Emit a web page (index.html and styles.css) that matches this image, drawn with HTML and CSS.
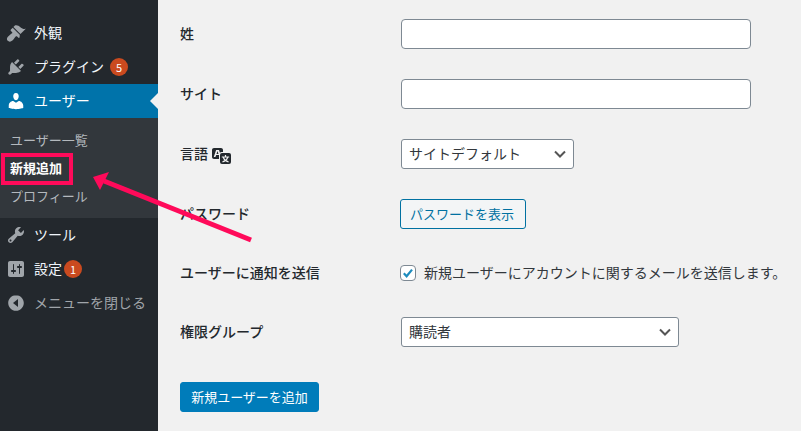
FILE: index.html
```html
<!DOCTYPE html>
<html lang="ja">
<head>
<meta charset="utf-8">
<title>新規追加</title>
<link rel="stylesheet" href="styles.css">
</head>
<body>
<div class="page">
  <aside class="sidebar">
    <nav class="menu">
      <a class="item"><svg class="ico" viewBox="0 0 20 20"><path d="M14.48 11.06L7.41 3.99l1.5-1.5c.5-.56 2.3-.47 3.51.32 1.21.8 1.43 1.28 2.91 2.1 1.18.64 2.45 1.26 4.45.85zm-.71.71L6.7 4.7 4.93 6.47c-.39.39-.39 1.02 0 1.41l1.06 1.06c.39.39.39 1.03 0 1.42-.6.6-1.43 1.11-2.21 1.69-.35.26-.7.53-1.01.84C1.43 13.71-.05 16.08 1.72 17.85c1.77 1.77 4.14.29 5.45-1.07.31-.31.58-.66.84-1.01.58-.78 1.09-1.61 1.69-2.21.39-.39 1.03-.39 1.42 0l1.06 1.06c.39.39 1.02.39 1.41 0z"/></svg><span>外観</span></a>
      <a class="item"><svg class="ico" viewBox="0 0 20 20"><path d="M13.11 4.36L9.87 7.6 8 5.73l3.24-3.24c.35-.34 1.05-.2 1.56.32.52.51.66 1.21.31 1.55zm-8 1.77l.91-1.12 9.01 9.01-1.19.84c-.71.71-2.63 1.16-3.82 1.16H6.14L4.9 17.26c-.59.59-1.54.59-2.12 0-.59-.58-.59-1.53 0-2.12l1.24-1.24v-3.88c0-1.13.4-3.19 1.09-3.89zm7.26 3.97l3.24-3.24c.34-.35 1.04-.21 1.55.31.52.51.66 1.21.31 1.55l-3.24 3.25z"/></svg><span>プラグイン</span><b class="badge badge-plugins">5</b></a>
      <a class="item active"><svg class="ico" viewBox="0 0 20 20"><path d="M10 9.25c-2.27 0-2.73-3.44-2.73-3.44C7 4.02 7.82 2 9.97 2c2.16 0 2.98 2.02 2.71 3.81 0 0-.41 3.44-2.68 3.44zm0 2.57L12.72 10c2.39 0 4.52 2.33 4.52 4.53v2.49s-3.65 1.13-7.24 1.13c-3.65 0-7.24-1.13-7.24-1.13v-2.49c0-2.25 1.94-4.48 4.47-4.48z"/></svg><span>ユーザー</span></a>
      <div class="submenu">
        <a class="subitem">ユーザー一覧</a>
        <a class="subitem current">新規追加</a>
        <a class="subitem">プロフィール</a>
      </div>
      <a class="item"><svg class="ico" viewBox="0 0 20 20"><path d="M16.68 9.77c-1.34 1.34-3.3 1.67-4.95.99l-5.41 6.52c-.99.99-2.59.99-3.58 0s-.99-2.59 0-3.57l6.52-5.42c-.68-1.65-.35-3.61.99-4.95 1.28-1.28 3.12-1.62 4.72-1.06l-2.89 2.89 2.82 2.82 2.86-2.87c.53 1.58.18 3.39-1.08 4.65zM3.81 16.21c.4.39 1.04.39 1.43 0 .4-.4.4-1.04 0-1.43-.39-.4-1.03-.4-1.43 0-.39.39-.39 1.03 0 1.43z"/></svg><span>ツール</span></a>
      <a class="item"><svg class="ico" viewBox="0 0 20 20"><path d="M18 16V4c0-1.1-.9-2-2-2H4c-1.1 0-2 .9-2 2v12c0 1.1.9 2 2 2h12c1.1 0 2-.9 2-2zM8 11h1c.55 0 1 .45 1 1s-.45 1-1 1H8v1.5c0 .28-.22.5-.5.5s-.5-.22-.5-.5V13H6c-.55 0-1-.45-1-1s.45-1 1-1h1V5.5c0-.28.22-.5.5-.5s.5.22.5.5V11zm5-2h-1c-.55 0-1-.45-1-1s.45-1 1-1h1V5.5c0-.28.22-.5.5-.5s.5.22.5.5V7h1c.55 0 1 .45 1 1s-.45 1-1 1h-1v5.5c0 .28-.22.5-.5.5s-.5-.22-.5-.5V9z"/></svg><span>設定</span><b class="badge badge-settings">1</b></a>
      <a class="item muted"><svg class="ico" viewBox="0 0 20 20"><path d="M10 2.2c-4.3 0-7.8 3.5-7.8 7.8s3.5 7.800 7.800 7.800 7.800-3.500 7.800-7.800-3.500-7.800-7.800-7.800zm2 11.800l-5-4 5-4v8z"/></svg><span>メニューを閉じる</span></a>
    </nav>
  </aside>
  <main class="content">
    <div class="form">
      <div class="row"><label class="label">姓</label><input class="text" type="text"></div>
      <div class="row"><label class="label">サイト</label><input class="text" type="text"></div>
      <div class="row"><label class="label">言語 <svg class="lang" viewBox="0 0 20 20"><path class="lang-a" d="M11 7H9.500c-.630 0-1.250.300-1.590.700L7 5H4.130l-2.390 7h1.690l.740-2H7v4H2c-1.100 0-2-.900-2-2V5c0-1.100.900-2 2-2h7c1.100 0 2 .900 2 2v2zM6.510 9H4.490l1-2.930z"/><rect class="lang-a" x="8" y="8" width="11" height="11" rx="2"/><path class="lang-z" d="M9.800 12h7.400M13.500 10v2M11.300 12.200c.700 2.200 2.600 3.900 5.200 4.600M15.700 12.200c-.700 2.200-2.600 3.900-5.200 4.600"/></svg></label><div class="select lang-select"><span>サイトデフォルト</span><svg class="chev" viewBox="0 0 16 16"><path d="M3 5.500l5 5 5-5"/></svg></div></div>
      <div class="row"><label class="label">パスワード</label><button class="btn" type="button">パスワードを表示</button></div>
      <div class="row"><label class="label">ユーザーに通知を送信</label><div class="check"><span class="box"><svg viewBox="0 0 16 16"><path d="M3.200 8.300l3.200 3.400 6.200-7.600"/></svg></span><span>新規ユーザーにアカウントに関するメールを送信します。</span></div></div>
      <div class="row"><label class="label">権限グループ</label><div class="select role-select"><span>購読者</span><svg class="chev" viewBox="0 0 16 16"><path d="M3 5.500l5 5 5-5"/></svg></div></div>
    </div>
    <button class="primary" type="button">新規ユーザーを追加</button>
  </main>
</div>
<svg class="annot" viewBox="0 0 801 431">
  <rect class="annot-box" x="3" y="155" width="68" height="28"/>
  <path class="annot-line" d="M104 181L251 240"/>
  <path class="annot-head" d="M93 177L109 172L100 190Z"/>
</svg>
</body>
</html>
```
FILE: styles.css
```css
* { box-sizing: border-box; }
html, body { margin: 0; height: 100%; overflow: hidden; }
body {
  background: #f1f1f1;
  color: #23282d;
  font-family: "Noto Sans CJK JP", "Noto Sans", sans-serif;
  font-size: 14px;
  line-height: 1.4;
}
.page { display: flex; height: 431px; }
.sidebar { width: 158px; flex: none; background: #23282d; padding-top: 16px; }
.menu { display: flex; flex-direction: column; }
.item {
  height: 34px;
  display: flex;
  align-items: center;
  color: #f0f5fa;
  position: relative;
}
.item .ico { width: 20px; height: 20px; margin: 0 8px 0 6px; fill: #a0a5aa; flex: none; }
.item.active { background: #0073aa; color: #fff; }
.item.active .ico { fill: #fff; }
.item.active::after {
  content: "";
  position: absolute;
  right: 0;
  top: 9px;
  border: 8px solid transparent;
  border-right-color: #f1f1f1;
  border-left-width: 0;
}
.item.muted { color: #a0a5aa; }
.badge {
  width: 18px;
  height: 18px;
  border-radius: 50%;
  background: #ca4a1f;
  color: #fff;
  font-size: 11px;
  font-weight: 400;
  line-height: 18px;
  text-align: center;
}
.badge-plugins { margin-left: 6px; }
.badge-settings { margin-left: 2px; }
.submenu {
  background: #32373c;
  height: 100px;
  padding-top: 8px;
  display: flex;
  flex-direction: column;
}
.subitem {
  height: 28px;
  padding-left: 10px;
  font-size: 13px;
  line-height: 28px;
  color: #b4b9be;
}
.subitem.current { color: #fff; font-weight: 700; }
.content { flex: 1; padding: 4px 0 0 22px; }
.form { display: flex; flex-direction: column; }
.row { height: 60px; display: flex; align-items: center; }
.row:nth-child(5) { height: 58px; }
.label { width: 221px; flex: none; font-weight: 500; display: flex; align-items: center; gap: 4px; }
.lang { width: 20px; height: 20px; margin-top: 2px; }
.lang-a { fill: #23282d; }
.lang-z { fill: none; stroke: #f1f1f1; stroke-width: 1.200; }
.text {
  width: 350px;
  height: 30px;
  border: 1px solid #7e8993;
  border-radius: 4px;
  background: #fff;
}
.select {
  height: 30px;
  border: 1px solid #7e8993;
  border-radius: 3px;
  background: #fff;
  color: #32373c;
  display: flex;
  align-items: center;
  justify-content: space-between;
  padding: 0 5px 0 7px;
}
.lang-select { width: 173px; }
.role-select { width: 278px; }
.chev { width: 16px; height: 16px; fill: none; stroke: #555; stroke-width: 2; }
.btn {
  margin-left: -1px;
  width: 126px;
  height: 30px;
  padding: 0 2px 0 0;
  border: 1px solid #0071a1;
  border-radius: 3px;
  background: #f3f5f6;
  color: #0071a1;
  font: inherit;
  font-size: 13px;
}
.check { display: flex; align-items: center; gap: 8px; margin-left: -1px; color: #32373c; font-size: 14px; white-space: nowrap; }
.box {
  width: 16px;
  height: 16px;
  border: 1px solid #7e8993;
  border-radius: 4px;
  background: #fff;
  display: flex;
}
.box svg { width: 14px; height: 14px; fill: none; stroke: #1e8cbe; stroke-width: 2.500; }
.primary {
  display: block;
  margin-top: 20px;
  width: 139px;
  height: 30px;
  padding: 0;
  border: 1px solid #007cba;
  border-radius: 3px;
  background: #007cba;
  color: #fff;
  font: inherit;
  font-size: 13px;
}
.annot { position: absolute; left: 0; top: 0; width: 801px; height: 431px; pointer-events: none; }
.annot-box { fill: none; stroke: #ff0a5a; stroke-width: 4; }
.annot-line { fill: none; stroke: #ff0a5a; stroke-width: 5; }
.annot-head { fill: #ff0a5a; }
```
